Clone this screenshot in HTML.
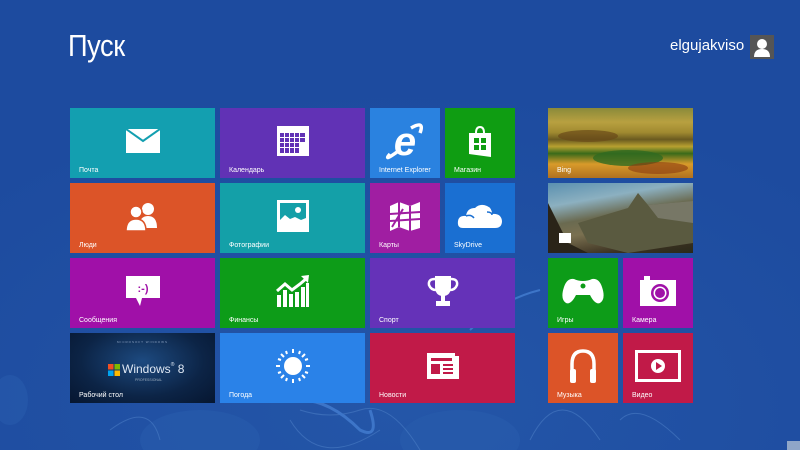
<!DOCTYPE html>
<html><head><meta charset="utf-8"><style>
*{margin:0;padding:0;box-sizing:border-box}
body{width:800px;height:450px;overflow:hidden;background:#1f4da0;font-family:"Liberation Sans","Noto Sans CJK SC",sans-serif;position:relative;color:#fff}
.t{position:absolute;width:145px;height:70px;overflow:hidden}
.s{width:70px}
.l{position:absolute;left:9px;bottom:4px;font-size:7px;color:#fff}
.i{position:absolute;left:50%;top:33px;transform:translate(-50%,-50%)}
h1{position:absolute;left:68px;top:28px;font-weight:300;font-size:31px;color:#fff;font-family:"Liberation Sans",sans-serif;letter-spacing:-0.5px;transform:scaleX(.88);transform-origin:left}
</style></head><body>
<svg style="position:absolute;left:0;top:0" width="800" height="450">
<defs><radialGradient id="bg" cx="0.5" cy="0.9" r="0.7"><stop offset="0" stop-color="#2456a8"/><stop offset="1" stop-color="#1d4b9f"/></radialGradient></defs>
<rect width="800" height="450" fill="url(#bg)"/>
<g fill="#2a5fb0" opacity=".45"><ellipse cx="200" cy="440" rx="60" ry="30"/><ellipse cx="460" cy="440" rx="60" ry="30"/><ellipse cx="10" cy="400" rx="18" ry="25"/></g>
<g fill="none" stroke="#4a7cc4" stroke-width="1" opacity=".6">
<path d="M290 420 Q320 470 380 430"/><path d="M300 410 Q330 420 360 410 Q390 400 420 450"/>
<path d="M160 440 Q150 400 110 430"/><path d="M530 440 Q560 380 600 440"/><path d="M620 420 Q640 400 680 440"/>
</g>
<path d="M300 400 Q330 400 360 430 Q380 440 370 410" fill="none" stroke="#3d75c8" stroke-width="3"/>
<path d="M470 330 Q500 300 540 290" fill="none" stroke="#3d75c8" stroke-width="2"/>
<rect x="787" y="441" width="13" height="9" fill="#8fa6c8"/>
</svg>
<h1>Пуск</h1>
<div style="position:absolute;left:670px;top:37px;font-size:15px;color:#fff">elgujakviso</div>
<div style="position:absolute;left:750px;top:35px;width:24px;height:24px;background:#555"><svg width="24" height="24"><circle cx="12" cy="9" r="5" fill="#fff"/><path d="M4 22 Q4 14 12 14 Q20 14 20 22Z" fill="#fff"/></svg></div>

<div class="t" style="left:70px;top:108px;background:#139fb0"><svg class="i" width="34" height="24"><rect x="0" y="0" width="34" height="24" fill="#fff"/><path d="M0 0 L17 12 L34 0" stroke="#139fb0" stroke-width="2" fill="none"/></svg><div class="l">Почта</div></div>
<div class="t" style="left:220px;top:108px;background:#6132b5"><svg class="i" width="32" height="30"><rect x="0" y="0" width="32" height="30" fill="#fff"/><g fill="#6132b5"><rect x="3" y="7" width="4" height="4"/><rect x="8" y="7" width="4" height="4"/><rect x="13" y="7" width="4" height="4"/><rect x="18" y="7" width="4" height="4"/><rect x="23" y="7" width="5" height="4"/><rect x="3" y="12" width="4" height="4"/><rect x="8" y="12" width="4" height="4"/><rect x="13" y="12" width="4" height="4"/><rect x="18" y="12" width="4" height="4"/><rect x="23" y="12" width="5" height="4"/><rect x="3" y="17" width="4" height="4"/><rect x="8" y="17" width="4" height="4"/><rect x="13" y="17" width="4" height="4"/><rect x="18" y="17" width="4" height="4"/><rect x="3" y="22" width="4" height="5"/><rect x="8" y="22" width="4" height="5"/><rect x="13" y="22" width="4" height="5"/><rect x="18" y="22" width="4" height="5"/></g></svg><div class="l">Календарь</div></div>
<div class="t s" style="left:370px;top:108px;background:#2a82e0"><svg class="i" width="40" height="38" viewBox="0 0 40 38"><text x="20" y="33" text-anchor="middle" font-size="40" font-weight="bold" font-style="italic" fill="#fff" font-family="Liberation Sans">e</text><path d="M5 32 Q-2 40 12 30 M26 6 Q40 -2 35 11" stroke="#fff" stroke-width="3.5" fill="none"/></svg><div class="l">Internet Explorer</div></div>
<div class="t s" style="left:445px;top:108px;background:#0f9d12"><svg class="i" width="24" height="32"><path d="M8 8 Q8 2 12 2 Q16 2 16 8" stroke="#fff" stroke-width="2" fill="none"/><path d="M1 8 L23 8 L23 32 L1 29Z" fill="#fff"/><g fill="#0f9d12"><rect x="6" y="13" width="5" height="5"/><rect x="13" y="13" width="5" height="5"/><rect x="6" y="20" width="5" height="5"/><rect x="13" y="20" width="5" height="5"/></g></svg><div class="l">Магазин</div></div>
<div class="t" style="left:548px;top:108px;background:linear-gradient(180deg,#8a8a3a 0%,#b8a040 20%,#a08a30 35%,#6a5a20 45%,#b8a030 55%,#3a6a1a 65%,#d89a2a 80%,#b07020 100%)"><svg style="position:absolute;left:0;top:0" width="145" height="70"><ellipse cx="80" cy="50" rx="35" ry="8" fill="#2f6a20" opacity=".8"/><ellipse cx="40" cy="28" rx="30" ry="6" fill="#6a4a18" opacity=".7"/><ellipse cx="110" cy="60" rx="30" ry="6" fill="#8a3a10" opacity=".6"/></svg><div class="l">Bing</div></div>

<div class="t" style="left:70px;top:183px;background:#dc5428"><svg class="i" width="38" height="30"><circle cx="24" cy="8" r="6" fill="#fff"/><path d="M15 27 Q15 15 24 15 Q33 15 33 27Z" fill="#fff"/><circle cx="12" cy="11" r="6" stroke="#dc5428" stroke-width="1.5" fill="#fff"/><path d="M2 30 Q2 18 12 18 Q22 18 22 30Z" fill="#fff" stroke="#dc5428" stroke-width="1.5"/></svg><div class="l">Люди</div></div>
<div class="t" style="left:220px;top:183px;background:#14a0a8"><svg class="i" width="32" height="32"><rect x="0" y="0" width="32" height="32" fill="#fff"/><rect x="3" y="3" width="26" height="22" fill="#14a0a8"/><circle cx="21" cy="10" r="3" fill="#fff"/><path d="M3 25 L3 20 L8 15 L13 19 L18 17 L24 20 L29 18 L29 25Z" fill="#fff"/></svg><div class="l">Фотографии</div></div>
<div class="t s" style="left:370px;top:183px;background:#a01ea2"><svg class="i" width="32" height="30"><path d="M1 5 L10 1 L21 5 L31 1 L31 27 L21 30 L10 26 L1 30Z" fill="#fff"/><g stroke="#a01ea2" stroke-width="2"><path d="M10 1 L10 26 M21 5 L21 30 M1 13 L31 11 M1 20 L31 18 M3 26 L14 8"/></g></svg><div class="l">Карты</div></div>
<div class="t s" style="left:445px;top:183px;background:#1a6fd2"><svg class="i" width="46" height="28"><path d="M6 26 Q0 26 1 19 Q2 13 9 14 Q10 6 18 6 Q23 1 30 4 Q35 6 35 12 Q44 11 45 19 Q45 26 38 26Z" fill="#fff"/><path d="M9 14 Q14 12 17 16 M30 10 Q35 10 35 13" stroke="#1a6fd2" stroke-width="1.5" fill="none"/></svg><div class="l">SkyDrive</div></div>
<div class="t" style="left:548px;top:183px;background:linear-gradient(170deg,#5a90b0 0%,#8cb0c0 25%,#6a6a50 45%,#7a7050 60%,#3a3020 85%,#2a2a1a 100%)"><svg style="position:absolute;left:0;top:0" width="145" height="70"><path d="M0 20 L20 60 L40 70 L0 70Z" fill="#2a2418"/><path d="M30 40 L80 25 L90 10 L100 22 L145 18 L145 60 L80 70 L40 60Z" fill="#5a5a40"/><path d="M100 22 L145 18 L145 40 L110 35Z" fill="#8a8a80" opacity=".6"/><rect x="11" y="50" width="12" height="10" fill="#fff"/></svg></div>

<div class="t" style="left:70px;top:258px;background:#a010a8"><svg class="i" width="34" height="30"><path d="M0 0 H34 V22 H16 L14 30 L10 22 H0Z" fill="#fff"/><text x="17" y="16" text-anchor="middle" font-size="11" font-weight="bold" fill="#a010a8" font-family="Liberation Sans">:-)</text></svg><div class="l">Сообщения</div></div>
<div class="t" style="left:220px;top:258px;background:#0d9c18"><svg class="i" width="34" height="32"><g fill="#fff"><rect x="1" y="20" width="4" height="12"/><rect x="7" y="15" width="4" height="17"/><rect x="13" y="19" width="4" height="13"/><rect x="19" y="17" width="4" height="15"/><rect x="25" y="12" width="4" height="20"/><rect x="30" y="8" width="3" height="24"/></g><path d="M1 16 L9 9 L16 15 L24 9 L31 3" stroke="#fff" stroke-width="3" fill="none"/><path d="M25 1 L33 0 L32 8Z" fill="#fff"/></svg><div class="l">Финансы</div></div>
<div class="t" style="left:370px;top:258px;background:#6532b8"><svg class="i" width="32" height="34"><path d="M8 2 H24 V12 Q24 22 16 22 Q8 22 8 12Z" fill="#fff"/><path d="M8 5 Q1 5 2 11 Q4 16 9 16 M24 5 Q31 5 30 11 Q28 16 23 16" stroke="#fff" stroke-width="2.5" fill="none"/><rect x="14" y="21" width="4" height="6" fill="#fff"/><rect x="9" y="27" width="14" height="5" fill="#fff"/></svg><div class="l">Спорт</div></div>
<div class="t s" style="left:548px;top:258px;background:#0d9c18"><svg class="i" width="42" height="28"><path d="M4 26 Q-2 22 2 10 Q5 1 12 2 Q16 4 21 4 Q26 4 30 2 Q37 1 40 10 Q44 22 38 26 Q33 28 28 18 H14 Q9 28 4 26Z" fill="#fff"/><circle cx="21" cy="9" r="2.5" fill="#0d9c18"/></svg><div class="l">Игры</div></div>
<div class="t s" style="left:623px;top:258px;background:#a010a8"><svg class="i" width="36" height="30"><rect x="4" y="0" width="6" height="4" fill="#fff"/><rect x="0" y="4" width="36" height="26" fill="#fff"/><circle cx="20" cy="17" r="9" fill="#a010a8"/><circle cx="20" cy="17" r="6.5" fill="#fff"/><circle cx="20" cy="17" r="5" fill="#a010a8"/></svg><div class="l">Камера</div></div>

<div class="t" style="left:70px;top:333px;background:radial-gradient(ellipse at 50% 40%,#1d4a80 0%,#0c2446 60%,#061630 100%)"><div style="position:absolute;left:0;width:100%;top:7px;text-align:center;font-size:3px;color:#8aa0c0;letter-spacing:1px">MICROSOFT WINDOWS</div>
<svg style="position:absolute;left:38px;top:31px" width="12" height="12"><rect x="0" y="0" width="5.5" height="5.5" fill="#f25022"/><rect x="6.5" y="0" width="5.5" height="5.5" fill="#7fba00"/><rect x="0" y="6.5" width="5.5" height="5.5" fill="#00a4ef"/><rect x="6.5" y="6.5" width="5.5" height="5.5" fill="#ffb900"/></svg>
<div style="position:absolute;left:52px;top:29px;font-size:12px;color:#dfe8f4">Windows<span style="font-size:5px;vertical-align:top">®</span> 8</div>
<div style="position:absolute;left:65px;top:45px;font-size:3.5px;color:#9ab">PROFESSIONAL</div>
<div class="l">Рабочий стол</div></div>
<div class="t" style="left:220px;top:333px;background:#2a82e8"><svg class="i" width="36" height="36"><circle cx="18" cy="18" r="9" fill="#fff"/><g stroke="#fff" stroke-width="2"><path d="M18 1 V5 M18 31 V35 M1 18 H5 M31 18 H35 M6 6 L9 9 M27 27 L30 30 M6 30 L9 27 M27 9 L30 6 M11 3 L12 6 M24 30 L25 33 M3 11 L6 12 M30 24 L33 25 M3 25 L6 24 M30 12 L33 11 M11 33 L12 30 M24 6 L25 3"/></g></svg><div class="l">Погода</div></div>
<div class="t" style="left:370px;top:333px;background:#c11a48"><svg class="i" width="34" height="28"><path d="M1 1 H29 V4 H33 V27 H1Z" fill="#fff"/><g fill="#c11a48"><rect x="5" y="6" width="21" height="3"/><rect x="5" y="12" width="9" height="10"/><rect x="17" y="12" width="10" height="2"/><rect x="17" y="16" width="10" height="2"/><rect x="17" y="20" width="10" height="2"/></g></svg><div class="l">Новости</div></div>
<div class="t s" style="left:548px;top:333px;background:#dc5428"><svg class="i" width="30" height="36"><path d="M4 26 V16 Q4 3 15 3 Q26 3 26 16 V26" stroke="#fff" stroke-width="3.5" fill="none"/><rect x="2" y="21" width="6" height="14" rx="2" fill="#fff"/><rect x="22" y="21" width="6" height="14" rx="2" fill="#fff"/></svg><div class="l">Музыка</div></div>
<div class="t s" style="left:623px;top:333px;background:#c11a48"><svg class="i" width="46" height="32"><rect x="1.5" y="1.5" width="43" height="29" stroke="#fff" stroke-width="3" fill="none"/><circle cx="23" cy="16" r="7" fill="#fff"/><path d="M21 12 L27 16 L21 20Z" fill="#c11a48"/></svg><div class="l">Видео</div></div>
</body></html>
